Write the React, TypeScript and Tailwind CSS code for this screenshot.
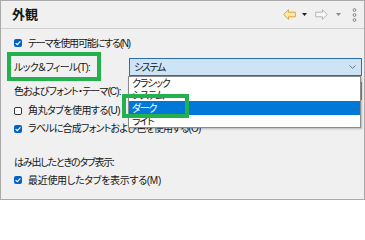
import React from "react";

const FONT = "font-['Liberation_Sans','Noto_Sans_CJK_JP',sans-serif]";

function Check({ checked }: { checked: boolean }) {
  if (!checked) {
    return <span className="w-[8px] h-[8px] shrink-0 rounded-[2px] border border-[#333] bg-white" />;
  }
  return (
    <span className="w-[8px] h-[8px] shrink-0 rounded-[2px] bg-[#0063c4] flex items-center justify-center">
      <svg width="8" height="8" viewBox="0 0 8 8">
        <polyline points="1.6,4.1 3.3,5.7 6.4,2.3" fill="none" stroke="#fff" strokeWidth="1.2" />
      </svg>
    </span>
  );
}

// tracking は行ごとに調整（かなの幅が原画のフォントより広いため）
function CheckRow({
  checked,
  label,
  className = "",
  track = "",
}: {
  checked: boolean;
  label: string;
  className?: string;
  track?: string;
}) {
  return (
    <div className={`flex items-center gap-[6px] ${className}`}>
      <Check checked={checked} />
      <span className={`whitespace-nowrap ${track}`}>{label}</span>
    </div>
  );
}

export default function App() {
  return (
    <div
      className={`relative w-[365px] h-[200px] overflow-hidden border border-[#a9a9a9] bg-[#f0f0f0] text-[10px] text-[#151515] [font-feature-settings:'palt'] ${FONT}`}
    >
      {/* Header */}
      <div className="h-[28px] flex items-center border-b border-[#cfcfcf] pl-[11px] pr-[7px]">
        <h1 className="text-[13px] font-bold">外観</h1>
        <div className="ml-auto flex items-center">
          <svg width="13" height="11" viewBox="0 0 13 11">
            <polygon points="0.7,5.5 5.5,0.7 5.5,3.2 12.3,3.2 12.3,7.8 5.5,7.8 5.5,10.3" fill="#fde9a8" stroke="#e3a236" strokeWidth="1" />
          </svg>
          <svg width="5" height="3" viewBox="0 0 5 3" className="ml-[6px]">
            <polygon points="0,0 5,0 2.5,3" fill="#1f1f1f" />
          </svg>
          <svg width="13" height="11" viewBox="0 0 13 11" className="ml-[8px]">
            <polygon points="12.3,5.5 7.5,0.7 7.5,3.2 0.7,3.2 0.7,7.8 7.5,7.8 7.5,10.3" fill="#f7f7f7" stroke="#b5b5b5" strokeWidth="1" />
          </svg>
          <svg width="5" height="3" viewBox="0 0 5 3" className="ml-[8px]">
            <polygon points="0,0 5,0 2.5,3" fill="#8a8a8a" />
          </svg>
          <svg width="5" height="14" viewBox="0 0 5 14" className="ml-[11px]">
            <circle cx="2.5" cy="2" r="1.4" fill="none" stroke="#7a7a7a" strokeWidth="0.9" />
            <circle cx="2.5" cy="7" r="1.4" fill="none" stroke="#7a7a7a" strokeWidth="0.9" />
            <circle cx="2.5" cy="12" r="1.4" fill="none" stroke="#7a7a7a" strokeWidth="0.9" />
          </svg>
        </div>
      </div>

      {/* Body */}
      <div className="pt-[6px] pl-[13px] pr-[2px]">
        <CheckRow checked label="テーマを使用可能にする(N)" className="h-[16px]" track="tracking-[-1.2px]" />

        <div className="mt-[6px] h-[20px] grid grid-cols-[115px_1fr] items-center">
          <span className="whitespace-nowrap tracking-[-0.75px]">ルック＆フィール(T):</span>
          <div className="relative">
            <div className="h-[18px] flex items-center border border-[#2c6db0] bg-[#cde4f7] pl-[4px] pr-[5px]">
              <span className="tracking-[-1.4px]">システム</span>
              <svg width="7" height="4" viewBox="0 0 7 4" className="ml-auto">
                <polyline points="0.5,0.5 3.5,3.3 6.5,0.5" fill="none" stroke="#666" strokeWidth="0.9" />
              </svg>
            </div>
            {/* Open dropdown list */}
            <div className="absolute z-10 left-[-1px] right-[1px] top-[18px] border border-[#8a8a8a] bg-white tracking-[-1.2px] shadow-[1px_1px_2px_rgba(0,0,0,0.25)]">
              <div className="h-[12px] flex items-center pl-[3px]">クラシック</div>
              <div className="h-[12px] flex items-center pl-[3px]">システム</div>
              <div className="h-[14px] flex items-center pl-[3px] bg-[#0078d7] text-white">ダーク</div>
              <div className="h-[12px] flex items-center pl-[3px]">ライト</div>
            </div>
          </div>
        </div>

        <div className="h-[24px] pt-[4px] grid grid-cols-[115px_1fr] items-center">
          <span className="whitespace-nowrap tracking-[-0.85px]">色およびフォント・テーマ(C):</span>
          <div className="h-[18px] border border-[#8a8a8a] bg-white" />
        </div>

        <CheckRow checked={false} label="角丸タブを使用する(U)" className="h-[19px]" track="tracking-[-0.55px]" />
        <CheckRow checked label="ラベルに合成フォントおよび色を使用する(O)" className="h-[17px]" track="tracking-[-0.8px]" />

        <div className="mt-[17px] h-[17px] flex items-center">
          <span className="tracking-[-1.2px]">はみ出したときのタブ表示:</span>
        </div>
        <CheckRow checked label="最近使用したタブを表示する(M)" className="h-[18px]" track="tracking-[-0.3px]" />
      </div>

      {/* Highlight annotations */}
      <div className="absolute left-[6px] top-[51px] w-[94px] h-[29px] border-[4px] border-[#22b14c] pointer-events-none" />
      <div className="absolute z-20 left-[121px] top-[93px] w-[67px] h-[24px] border-[4px] border-[#22b14c] pointer-events-none" />
    </div>
  );
}
